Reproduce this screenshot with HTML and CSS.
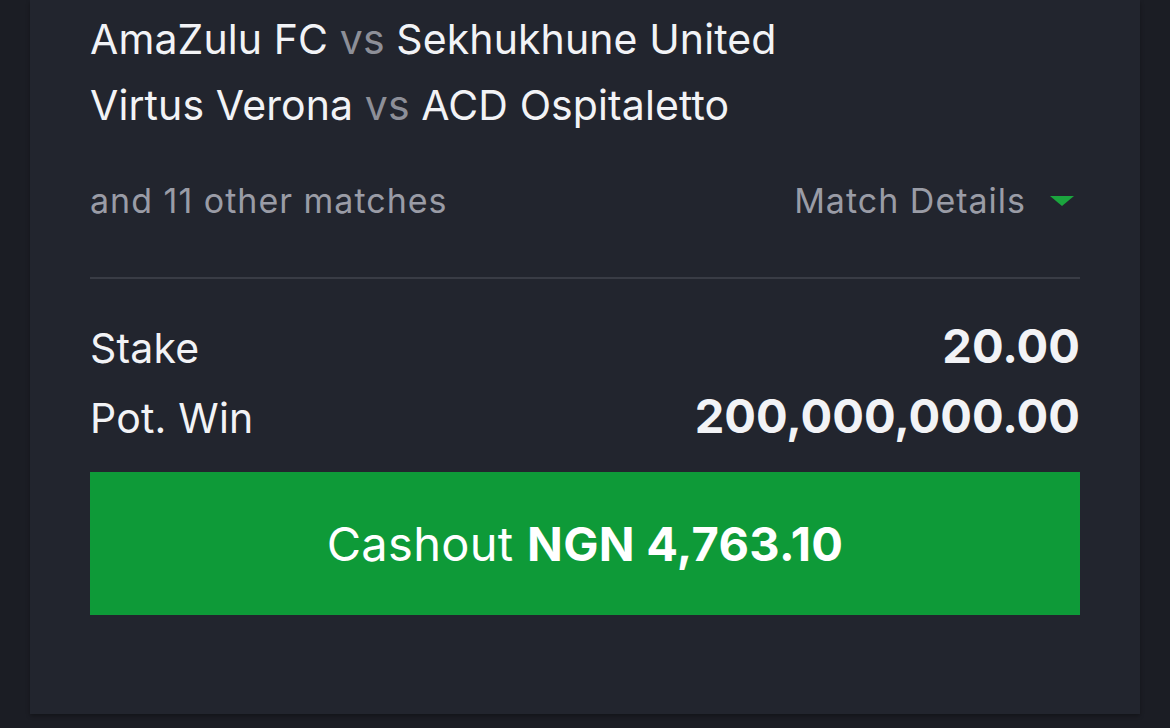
FILE: index.html
```html
<!DOCTYPE html>
<html>
<head>
    <title>Cashout</title>
    <link rel="stylesheet" href="styles.css">
</head>
<body>
<div class="bet-card">
    <div class="match-list">
        <p class="match">AmaZulu FC <span class="vs">vs</span> Sekhukhune United</p>
        <p class="match">Virtus Verona <span class="vs">vs</span> ACD Ospitaletto</p>
    </div>
    <div class="more-row">
        <span class="more-text">and 11 other matches</span>
        <span class="details-toggle">Match Details <span class="caret"></span></span>
    </div>
    <div class="summary">
        <div class="summary-row">
            <span class="summary-label">Stake</span>
            <span class="summary-value">20.00</span>
        </div>
        <div class="summary-row">
            <span class="summary-label">Pot. Win</span>
            <span class="summary-value">200,000,000.00</span>
        </div>
    </div>
    <button class="cashout-btn">Cashout <b>NGN 4,763.10</b></button>
</div>
</body>
</html>
```

FILE: styles.css
```css
body {
    margin: 0;
    background-color: #1b1d24;
    font-family: Inter, "Noto Sans", sans-serif;
    color: #f2f3f6;
    height: 728px;
    overflow: hidden;
}

.bet-card {
    width: 1110px;
    margin-left: 30px;
    height: 714px;
    box-sizing: border-box;
    padding: 0 60px;
    background-color: #22252e;
    box-shadow: 0 2px 4px rgba(0, 0, 0, 0.3);
}

.match-list {
    padding-top: 6px;
}

.match {
    margin: 0;
    font-size: 41px;
    line-height: 66px;
    letter-spacing: 0.1px;
}

.vs {
    color: #8d8f98;
}

.more-row {
    display: flex;
    justify-content: space-between;
    align-items: center;
    margin-top: 43px;
    padding-bottom: 56px;
    border-bottom: 2px solid #393c45;
    font-size: 34px;
    line-height: 40px;
    letter-spacing: 1px;
    color: #9a9ca6;
}

.details-toggle {
    display: flex;
    align-items: center;
}

.caret {
    width: 0;
    height: 0;
    margin-left: 24px;
    margin-right: 6px;
    border-left: 12px solid transparent;
    border-right: 12px solid transparent;
    border-top: 10px solid #1ba53e;
}

.summary {
    padding-top: 32px;
}

.summary-row {
    display: flex;
    justify-content: space-between;
    align-items: baseline;
    height: 70px;
    line-height: 70px;
}

.summary-label {
    font-size: 41px;
    letter-spacing: 0.2px;
}

.summary-value {
    font-size: 47px;
    font-weight: 700;
}

.cashout-btn {
    display: block;
    width: 100%;
    height: 143px;
    margin-top: 21px;
    padding: 0;
    border: none;
    background-color: #0e9a38;
    color: #fff;
    font-family: inherit;
    font-size: 47px;
    letter-spacing: 0.3px;
}
```
